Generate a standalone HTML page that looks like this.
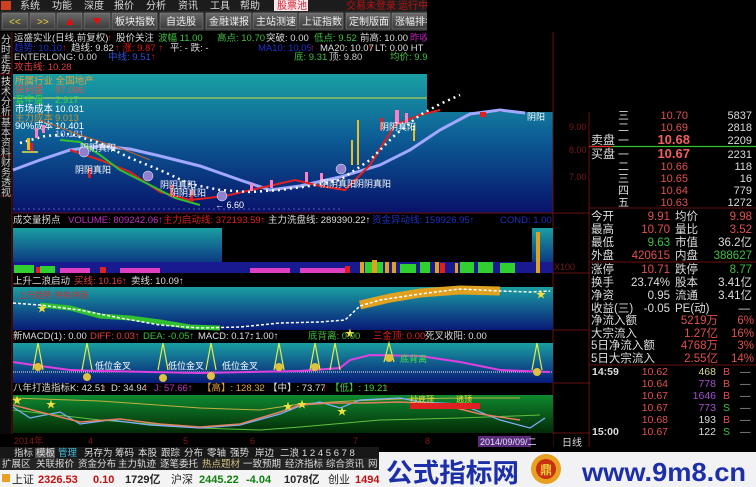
<!DOCTYPE html>
<html><head><meta charset="utf-8"><style>
html,body{margin:0;padding:0;background:#000;width:756px;height:487px;overflow:hidden}
svg{display:block}
text{font-family:"Liberation Sans","Noto Sans CJK SC",sans-serif}
</style></head><body>
<svg width="756" height="487" viewBox="0 0 756 487" xmlns="http://www.w3.org/2000/svg">
<defs>
<linearGradient id="g1" x1="0" y1="0" x2="0" y2="1"><stop offset="0" stop-color="#1aa0a4"/><stop offset="0.45" stop-color="#0d5e96"/><stop offset="1" stop-color="#07126a"/></linearGradient>
<linearGradient id="g2" x1="0" y1="0" x2="0" y2="1"><stop offset="0" stop-color="#1a9ea2"/><stop offset="1" stop-color="#081a78"/></linearGradient>
<linearGradient id="g3" x1="0" y1="0" x2="0" y2="1"><stop offset="0" stop-color="#0f8a30"/><stop offset="1" stop-color="#032a06"/></linearGradient>
<linearGradient id="tb" x1="0" y1="0" x2="0" y2="1"><stop offset="0" stop-color="#6a6a6a"/><stop offset="1" stop-color="#3a3a3a"/></linearGradient>
</defs>
<rect width="756" height="487" fill="#000"/>
<!-- menu -->
<rect x="0" y="0" width="427" height="11" fill="#1c1c1c"/>
<rect x="1" y="1" width="10" height="9" fill="#d04020"/>
<g font-size="10" fill="#ddd">
<text x="20" y="9">系统</text><text x="52" y="9">功能</text><text x="84" y="9">深度</text><text x="114" y="9">报价</text><text x="146" y="9">分析</text><text x="178" y="9">资讯</text><text x="210" y="9">工具</text><text x="240" y="9">帮助</text></g>
<rect x="274" y="0" width="34" height="11" fill="#f2e8ec"/>
<text x="277" y="9" font-size="10" fill="#e02030">股票池</text>
<text x="346" y="9" font-size="10" fill="#c01010">交易未登录</text>
<text x="398" y="9" font-size="10" fill="#c01010">运行中</text>
<!-- toolbar -->
<rect x="0" y="11" width="427" height="20" fill="#2a2a2a"/>
<g fill="url(#tb)" stroke="#888" stroke-width="0.6">
<rect x="2" y="13" width="26" height="16"/><rect x="30" y="13" width="25" height="16"/><rect x="57" y="13" width="25" height="16"/><rect x="84" y="13" width="26" height="16"/>
<rect x="112" y="13" width="45" height="16"/><rect x="160" y="13" width="43" height="16"/><rect x="206" y="13" width="45" height="16"/><rect x="253" y="13" width="44" height="16"/><rect x="299" y="13" width="44" height="16"/><rect x="346" y="13" width="44" height="16"/><rect x="392" y="13" width="36" height="16"/></g>
<text x="9" y="25" font-size="10" fill="#e8d040">&lt;&lt;</text><text x="37" y="25" font-size="10" fill="#e8d040">&gt;&gt;</text>
<path d="M66 25 L70 18 L74 25Z" fill="#e01010"/><path d="M93 18 L101 18 L97 25Z" fill="#e01010"/>
<g font-size="10" fill="#eee"><text x="115" y="25">板块指数</text><text x="166" y="25">自选股</text><text x="209" y="25">金融谍报</text><text x="256" y="25">主站测速</text><text x="302" y="25">上证指数</text><text x="349" y="25">定制版面</text><text x="395" y="25">涨幅排名</text></g>
<!-- left sidebar -->
<rect x="0" y="32" width="12" height="403" fill="#0a0a0a"/>
<g stroke="#6a1010" stroke-width="1"><line x1="12" y1="32" x2="12" y2="435"/><line x1="0" y1="74" x2="12" y2="74"/><line x1="0" y1="116" x2="12" y2="116"/><line x1="0" y1="156" x2="12" y2="156"/><line x1="0" y1="196" x2="12" y2="196"/></g>
<g font-size="10" fill="#ccc" text-anchor="middle">
<text x="6" y="43">分</text><text x="6" y="53">时</text><text x="6" y="63">走</text><text x="6" y="73">势</text>
<text x="6" y="85" fill="#e8e8e8">技</text><text x="6" y="95">术</text><text x="6" y="105">分</text><text x="6" y="115">析</text>
<text x="6" y="126">基</text><text x="6" y="136">本</text><text x="6" y="146">资</text><text x="6" y="156">料</text>
<text x="6" y="166">财</text><text x="6" y="176">务</text><text x="6" y="186">透</text><text x="6" y="196">视</text></g>
<!-- info lines -->
<g font-size="9.5">
<text x="14" y="41" fill="#ddd">运盛实业(日线,前复权)</text><text x="107" y="41" fill="#e01010">↑</text><text x="116" y="41" fill="#ddd">股价关注</text>
<text x="158" y="41" fill="#40c040">波幅 11.00</text><text x="217" y="41" fill="#40c040">高点: 10.70</text><text x="266" y="41" fill="#ddd">突破: 0.00</text><text x="314" y="41" fill="#40c040">低点: 9.52</text><text x="360" y="41" fill="#ddd">前高: 10.00</text><text x="410" y="41" fill="#c020c0">昨收</text>
<text x="14" y="51" fill="#2030d0">趋势: 10.10</text><text x="62" y="51" fill="#e01010">↑</text><text x="71" y="51" fill="#ddd">趋线: 9.82</text><text x="115" y="51" fill="#e01010">↑ 涨: 9.87 ↑</text><text x="170" y="51" fill="#ddd">平: -  跌: -</text>
<text x="258" y="51" fill="#2030d0">MA10: 10.05</text><text x="310" y="51" fill="#e01010">↑</text><text x="320" y="51" fill="#ddd">MA20: 10.07</text><text x="368" y="51" fill="#e01010">↑</text><text x="375" y="51" fill="#ddd">LT: 0.00 HT</text>
<text x="14" y="60" fill="#ccc">ENTERLONG: 0.00</text><text x="108" y="60" fill="#3050e0">中线: 9.51</text><text x="151" y="60" fill="#e01010">↑</text>
<text x="294" y="60" fill="#40c040">底: 9.31</text><text x="329" y="60" fill="#ccc">顶: 9.80</text><text x="390" y="60" fill="#40c040">均价: 9.98</text>
<text x="14" y="70" fill="#e04040">攻击线: 10.28</text></g>
<!-- main chart -->
<rect x="13" y="74" width="540" height="139" fill="url(#g1)"/>
<rect x="427" y="0" width="329" height="112" fill="#000"/>
<line x1="13" y1="98" x2="427" y2="98" stroke="#d8e040" stroke-width="1"/>
<line x1="13" y1="209" x2="340" y2="209" stroke="#5060c0" stroke-dasharray="2,3"/>
<g font-size="9.5">
<text x="15" y="84" fill="#e0a040">所属行业 全国地产</text>
<text x="15" y="93" fill="#e05050">获利盘</text><text x="55" y="93" fill="#e05050">97.096</text>
<text x="15" y="103" fill="#40d040">套牢盘</text><text x="55" y="103" fill="#40d040">2.917</text>
<text x="15" y="112" fill="#fff">市场成本</text><text x="55" y="112" fill="#fff">10.031</text>
<text x="15" y="121" fill="#c09040">主力成本</text><text x="55" y="121" fill="#c09040">9.013</text>
<text x="15" y="129" fill="#fff">90%成本</text><text x="55" y="129" fill="#fff">10.401</text>
<text x="55" y="137" fill="#c0c0ff">10.181</text></g>
<polyline fill="none" stroke="#a0a8ff" stroke-width="3" points="13,170 40,160 70,150 100,146 130,149 160,156 200,166 240,180 270,190 300,186 340,177 380,165 410,150 440,130 470,114 500,110 525,113"/>
<polyline fill="none" stroke="#c06030" stroke-width="1" points="40,120 80,135 120,148 150,160"/>
<polyline fill="none" stroke="#e02020" stroke-width="2" points="70,150 100,160 130,172 160,192 190,200 225,196 260,188 295,180 320,186 345,190 370,165 395,125 420,115 440,110"/>
<polyline fill="none" stroke="#30c030" stroke-width="2" points="60,140 80,142 100,155 120,170 150,185 175,198 200,205"/>
<polyline fill="none" stroke="#fff" stroke-width="2.5" stroke-dasharray="2,4" points="20,143 45,136 70,134 100,143 130,158 160,170 190,184 220,190 250,192 280,190 310,186 340,180 370,160 395,135 420,115 440,104 460,95"/>
<g fill="#e8c020"><rect x="27" y="138" width="3" height="12"/><rect x="357" y="120" width="2" height="45"/><rect x="351" y="140" width="2" height="25"/><rect x="413" y="125" width="2" height="16"/></g>
<g fill="#ff80c0"><rect x="35" y="128" width="3" height="10"/><rect x="42" y="125" width="3" height="8"/><rect x="250" y="183" width="3" height="8"/><rect x="270" y="180" width="3" height="8"/><rect x="305" y="172" width="3" height="10"/><rect x="320" y="173" width="3" height="8"/><rect x="395" y="110" width="4" height="14"/><rect x="405" y="113" width="3" height="10"/></g>
<g fill="#e02020"><rect x="30" y="143" width="3" height="8"/><rect x="88" y="168" width="3" height="10"/><rect x="170" y="185" width="3" height="12"/><rect x="190" y="190" width="3" height="12"/><rect x="380" y="118" width="3" height="12"/><rect x="480" y="112" width="6" height="5"/></g>
<line x1="22" y1="152" x2="38" y2="152" stroke="#f0e040" stroke-width="1.5"/>
<g font-size="9" fill="#fff"><text x="75" y="173">阴阴真阳</text><text x="160" y="188">阴阴真阳</text><text x="170" y="196">阴阴真阳</text><text x="320" y="187">阴阴真阳</text><text x="355" y="187">阴阴真阳</text><text x="380" y="130">阴阴真阳</text><text x="80" y="151">阴阴真阳</text><text x="527" y="120">阴阳</text><text x="215" y="208">← 6.60</text></g>
<g fill="#9080d0" stroke="#fff" stroke-width="0.5"><circle cx="84" cy="152" r="5"/><circle cx="148" cy="176" r="5"/><circle cx="222" cy="196" r="5"/><circle cx="341" cy="169" r="5"/></g>
<!-- right axis area -->
<line x1="553" y1="32" x2="553" y2="447" stroke="#6a1010"/>
<line x1="589" y1="112" x2="589" y2="447" stroke="#6a1010"/>
<g stroke="#6a1010"><line x1="13" y1="213" x2="590" y2="213"/><line x1="553" y1="273" x2="590" y2="273"/><line x1="553" y1="330" x2="590" y2="330"/><line x1="553" y1="383" x2="590" y2="383"/><line x1="553" y1="433" x2="590" y2="433"/></g>
<g font-size="9" fill="#7a1818"><text x="569" y="130">9.00</text><text x="569" y="153">8.00</text><text x="569" y="180">7.00</text><text x="554" y="270">X100</text></g>
<!-- volume -->
<g font-size="9.5"><text x="13" y="223" fill="#ddd">成交量拐点</text><text x="68" y="223" fill="#c030c0">VOLUME: 809242.06↑</text><text x="163" y="223" fill="#e02020">主力启动线: 372193.59↑</text><text x="268" y="223" fill="#ddd">主力洗盘线: 289390.22↑</text><text x="372" y="223" fill="#2030c0">资金异动线: 159926.95↑</text><text x="500" y="223" fill="#2030c0">COND: 1.00</text></g>
<rect x="13" y="228" width="540" height="45" fill="url(#g2)"/>
<rect x="222" y="228" width="310" height="34" fill="#000"/>
<rect x="13" y="262" width="540" height="11" fill="#1a1a90"/>
<g fill="#30d030"><rect x="14" y="265" width="20" height="8"/><rect x="40" y="266" width="15" height="7"/><rect x="365" y="262" width="18" height="11"/><rect x="400" y="264" width="16" height="9"/><rect x="420" y="262" width="10" height="11"/><rect x="460" y="262" width="14" height="11"/><rect x="478" y="262" width="15" height="11"/><rect x="500" y="263" width="15" height="10"/></g>
<g fill="#e0a020"><rect x="360" y="262" width="4" height="11"/><rect x="372" y="260" width="5" height="13"/><rect x="385" y="262" width="4" height="11"/><rect x="392" y="262" width="4" height="11"/><rect x="435" y="262" width="4" height="11"/><rect x="455" y="263" width="3" height="10"/><rect x="536" y="232" width="4" height="41"/></g>
<g fill="#e040c0"><rect x="60" y="268" width="30" height="5"/><rect x="120" y="268" width="40" height="5"/><rect x="250" y="268" width="40" height="5"/><rect x="300" y="268" width="50" height="5"/></g>
<g fill="#e02020"><rect x="36" y="267" width="4" height="6"/><rect x="100" y="267" width="6" height="6"/><rect x="345" y="266" width="5" height="7"/><rect x="440" y="263" width="5" height="10"/></g>
<!-- 上升二浪 -->
<g font-size="9.5"><text x="13" y="284" fill="#ddd">上升二浪启动</text><text x="74" y="284" fill="#e04040">买线: 10.16↑</text><text x="131" y="284" fill="#ddd">卖线: 10.09↑</text></g>
<rect x="13" y="287" width="540" height="43" fill="url(#g2)"/>
<text x="18" y="298" font-size="8.5" fill="#d03030">上升趋势  持有待涨</text>
<polyline fill="none" stroke="#30c030" stroke-width="5" points="40,305 70,308 100,316 130,318 160,322 190,327 220,328"/>
<polyline fill="none" stroke="#e0a020" stroke-width="9" points="360,305 390,298 420,293 460,290 500,291"/>
<polyline fill="none" stroke="#fff" stroke-width="1.5" stroke-dasharray="3,2" points="13,303 40,305 80,310 120,318 160,325 200,328 240,327 280,323 320,322 345,320 360,306 380,300 420,294 460,289 500,291 530,292 550,291"/>
<g fill="#f0e040"><text x="37" y="312" font-size="10">★</text><text x="345" y="337" font-size="10">★</text><text x="536" y="298" font-size="10">★</text></g>
<!-- MACD -->
<g font-size="9.5"><text x="13" y="339" fill="#ddd">新MACD(1)</text><text x="63" y="339" fill="#ddd">: 0.00</text><text x="90" y="339" fill="#e04040">DIFF: 0.03↑</text><text x="143" y="339" fill="#40c040">DEA: -0.05↑</text><text x="198" y="339" fill="#ddd">MACD: 0.17↑</text><text x="250" y="339" fill="#ddd">: 1.00↑</text><text x="308" y="339" fill="#40c040">底背离: 0.00</text><text x="373" y="339" fill="#e02020">三金顶: 0.00</text><text x="425" y="339" fill="#ddd">死叉收阳: 0.00</text></g>
<rect x="13" y="343" width="540" height="40" fill="url(#g2)"/>
<line x1="13" y1="372" x2="553" y2="372" stroke="#e8e8e8" stroke-width="1" stroke-dasharray="1,1"/>
<polyline fill="none" stroke="#e040e0" stroke-width="2" points="13,362 40,366 70,370 100,371 150,372 200,373 250,372 300,371 340,368 350,360 370,355 420,356 460,362 500,370 550,372"/>
<g fill="none" stroke="#e0f040" stroke-width="1.2">
<path d="M33 370 L38 343 L43 370"/><path d="M82 370 L87 343 L92 370"/><path d="M158 370 L163 343 L168 370"/><path d="M206 370 L211 343 L216 370"/><path d="M274 370 L279 343 L284 370"/><path d="M310 370 L315 343 L320 370"/><path d="M330 370 L335 343 L340 370"/><path d="M384 362 L389 343 L394 362"/><path d="M532 370 L537 343 L542 370"/></g>
<g font-size="9" fill="#fff"><text x="95" y="369">低位金叉</text><text x="168" y="369">低位金叉</text><text x="222" y="369">低位金叉</text><text x="400" y="362" fill="#40e040">底背离</text></g>
<g fill="#e0c040"><circle cx="38" cy="367" r="4"/><circle cx="87" cy="377" r="4"/><circle cx="163" cy="378" r="4"/><circle cx="211" cy="376" r="4"/><circle cx="279" cy="367" r="4"/><circle cx="315" cy="367" r="4"/><circle cx="389" cy="358" r="4"/><circle cx="537" cy="372" r="4"/></g>
<!-- KDJ -->
<g font-size="9.5"><text x="13" y="391" fill="#ddd">八年打造指标</text><text x="70" y="391" fill="#ddd">K: 42.51</text><text x="102" y="391" fill="#e02020">↑</text><text x="111" y="391" fill="#ddd">D: 34.94</text><text x="143" y="391" fill="#e02020">↑</text><text x="154" y="391" fill="#c030c0">J: 57.66↑</text><text x="202" y="391" fill="#e0a040">【高】: 128.32</text><text x="258" y="391" fill="#40b0e0">↓</text><text x="268" y="391" fill="#ddd">【中】: 73.77</text><text x="322" y="391" fill="#e02020">↑</text><text x="330" y="391" fill="#40d040">【低】: 19.21</text><text x="384" y="391" fill="#e02020">↑</text></g>
<rect x="13" y="395" width="540" height="38" fill="url(#g3)"/>
<polyline fill="none" stroke="#c0b040" stroke-width="1" points="13,398 100,401 200,408 260,410 300,404 350,401 400,399 460,398 520,398"/>
<polyline fill="none" stroke="#60c040" stroke-width="1" points="13,410 100,420 200,428 260,430 300,427 380,420 460,418 540,415"/>
<polyline fill="none" stroke="#80b0ff" stroke-width="1.2" points="13,407 30,418 60,412 80,424 110,420 150,425 200,428 240,425 280,414 300,406 320,402 340,408 360,400 400,398 420,402 460,404 500,420 530,428 545,418"/>
<polyline fill="none" stroke="#e08060" stroke-width="1.5" points="13,405 40,412 80,422 120,419 160,424 200,427 240,424 280,412 300,405 330,403 360,403 400,402 440,404 480,414 520,420"/>
<rect x="410" y="403" width="70" height="6" fill="#e02020"/>
<g fill="#f0e040" font-size="10"><text x="12" y="404">★</text><text x="46" y="408">★</text><text x="283" y="410">★</text><text x="297" y="408">★</text><text x="337" y="415">★</text></g>
<g font-size="8" fill="#f0e040"><text x="410" y="402">抄底顶</text><text x="456" y="402">逃顶</text></g>
<!-- date bar -->
<rect x="0" y="434" width="553" height="13" fill="#000"/>
<g font-size="9" fill="#801818"><text x="14" y="444">2014年</text><text x="88" y="444">4</text><text x="183" y="444">5</text><text x="250" y="444">6</text><text x="353" y="444">7</text><text x="425" y="444">8</text></g>
<rect x="478" y="436" width="53" height="11" fill="#5a2a7a"/>
<text x="480" y="445" font-size="9" fill="#e0e0ff">2014/09/09/二</text>
<text x="562" y="446" font-size="10" fill="#ddd">日线</text>
<!-- tabs -->
<rect x="0" y="447" width="379" height="11" fill="#181818"/>
<g font-size="9.5" fill="#ddd"><text x="14" y="456">指标</text><rect x="35" y="448" width="20" height="10" fill="#505050"/><text x="36" y="456">模板</text><text x="58" y="456" fill="#40c0e0">管理</text><text x="84" y="456">另存为</text><text x="115" y="456">筹码</text><text x="138" y="456">本股</text><text x="161" y="456">跟踪</text><text x="184" y="456">分布</text><text x="207" y="456">零轴</text><text x="230" y="456">强势</text><text x="255" y="456">岸边</text><text x="280" y="456">二浪</text><text x="302" y="456">1 2 4 5 6 7 8</text></g>
<rect x="0" y="458" width="379" height="12" fill="#242424"/>
<g font-size="9.5" fill="#ddd"><text x="2" y="467">扩展区</text><text x="36" y="467">关联报价</text><text x="78" y="467">资金分布</text><text x="118" y="467">主力轨迹</text><text x="160" y="467">逐笔委托</text><text x="202" y="467" fill="#d0c080">热点题材</text><text x="243" y="467">一致预期</text><text x="285" y="467">经济指标</text><text x="326" y="467">综合资讯</text><text x="368" y="467">网</text></g>
<rect x="0" y="470" width="379" height="17" fill="#f4f4f4"/>
<rect x="2" y="474" width="8" height="8" fill="#e8a020"/>
<g font-size="11" font-weight="bold"><text x="12" y="483" fill="#222" font-weight="normal">上证</text><text x="38" y="483" fill="#c01010">2326.53</text><text x="93" y="483" fill="#c01010">0.10</text><text x="125" y="483" fill="#222">1729亿</text><text x="171" y="483" fill="#222" font-weight="normal">沪深</text><text x="199" y="483" fill="#108010">2445.22</text><text x="246" y="483" fill="#108010">-4.04</text><text x="284" y="483" fill="#222">1078亿</text><text x="328" y="483" fill="#222" font-weight="normal">创业</text><text x="355" y="483" fill="#c01010">1494</text></g>
<!-- logo -->
<rect x="379" y="452" width="377" height="35" fill="#f2f2f4"/>
<text x="386" y="482" font-size="26" font-weight="bold" fill="#1c2fa8" textLength="133" lengthAdjust="spacingAndGlyphs">公式指标网</text>
<circle cx="546" cy="469" r="15" fill="#e8a020"/>
<circle cx="546" cy="469" r="10" fill="#c83010"/>
<text x="540" y="474" font-size="12" font-weight="bold" fill="#f0d040">鼎</text>
<text x="582" y="481" font-size="26" font-weight="bold" fill="#1c2fa8" textLength="164" lengthAdjust="spacingAndGlyphs">www.9m8.cn</text>
<!-- right panel -->
<g font-size="11">
<text x="618" y="119" fill="#ddd">三</text><text x="688" y="119" fill="#e05050" text-anchor="end">10.70</text><text x="752" y="119" fill="#ddd" text-anchor="end">5837</text>
<text x="618" y="131" fill="#ddd">二</text><text x="688" y="131" fill="#e05050" text-anchor="end">10.69</text><text x="752" y="131" fill="#ddd" text-anchor="end">2818</text>
<text x="591" y="144" fill="#ddd" font-size="12">卖盘</text><text x="618" y="144" fill="#ddd">一</text><text x="690" y="144" fill="#f06060" text-anchor="end" font-size="13" font-weight="bold">10.68</text><text x="752" y="144" fill="#ddd" text-anchor="end">2209</text>
<line x1="591" y1="146.5" x2="756" y2="146.5" stroke="#30c030" stroke-width="1.3"/>
<line x1="589" y1="146.5" x2="612" y2="146.5" stroke="#e02020" stroke-width="1.3"/>
<text x="591" y="158" fill="#ddd" font-size="12">买盘</text><text x="618" y="158" fill="#ddd">一</text><text x="690" y="158" fill="#f06060" text-anchor="end" font-size="13" font-weight="bold">10.67</text><text x="752" y="158" fill="#ddd" text-anchor="end">2231</text>
<text x="618" y="170" fill="#ddd">二</text><text x="688" y="170" fill="#e05050" text-anchor="end">10.66</text><text x="752" y="170" fill="#ddd" text-anchor="end">118</text>
<text x="618" y="182" fill="#ddd">三</text><text x="688" y="182" fill="#e05050" text-anchor="end">10.65</text><text x="752" y="182" fill="#ddd" text-anchor="end">16</text>
<text x="618" y="194" fill="#ddd">四</text><text x="688" y="194" fill="#e05050" text-anchor="end">10.64</text><text x="752" y="194" fill="#ddd" text-anchor="end">779</text>
<text x="618" y="206" fill="#ddd">五</text><text x="688" y="206" fill="#e05050" text-anchor="end">10.63</text><text x="752" y="206" fill="#ddd" text-anchor="end">1272</text>
</g>
<g stroke="#6a1010"><line x1="589" y1="208" x2="756" y2="208"/><line x1="589" y1="262" x2="756" y2="262"/><line x1="589" y1="365" x2="756" y2="365"/></g>
<g font-size="11.5">
<text x="591" y="220" fill="#ddd">今开</text><text x="670" y="220" fill="#e05050" text-anchor="end">9.91</text><text x="675" y="220" fill="#ddd">均价</text><text x="752" y="220" fill="#e05050" text-anchor="end">9.98</text>
<text x="591" y="233" fill="#ddd">最高</text><text x="670" y="233" fill="#e05050" text-anchor="end">10.70</text><text x="675" y="233" fill="#ddd">量比</text><text x="752" y="233" fill="#e05050" text-anchor="end">3.52</text>
<text x="591" y="246" fill="#ddd">最低</text><text x="670" y="246" fill="#40c040" text-anchor="end">9.63</text><text x="675" y="246" fill="#ddd">市值</text><text x="752" y="246" fill="#ddd" text-anchor="end">36.2亿</text>
<text x="591" y="259" fill="#ddd">外盘</text><text x="670" y="259" fill="#e05050" text-anchor="end">420615</text><text x="675" y="259" fill="#ddd">内盘</text><text x="752" y="259" fill="#40c040" text-anchor="end">388627</text>
<text x="591" y="273" fill="#ddd">涨停</text><text x="670" y="273" fill="#e05050" text-anchor="end">10.71</text><text x="675" y="273" fill="#ddd">跌停</text><text x="752" y="273" fill="#40c040" text-anchor="end">8.77</text>
<text x="591" y="286" fill="#ddd">换手</text><text x="670" y="286" fill="#ddd" text-anchor="end">23.74%</text><text x="675" y="286" fill="#ddd">股本</text><text x="752" y="286" fill="#ddd" text-anchor="end">3.41亿</text>
<text x="591" y="299" fill="#ddd">净资</text><text x="670" y="299" fill="#ddd" text-anchor="end">0.95</text><text x="675" y="299" fill="#ddd">流通</text><text x="752" y="299" fill="#ddd" text-anchor="end">3.41亿</text>
<text x="591" y="312" fill="#ddd">收益(三)</text><text x="670" y="312" fill="#ddd" text-anchor="end">-0.05</text><text x="675" y="312" fill="#ddd">PE(动)</text><text x="750" y="312" fill="#ddd" text-anchor="end">—</text>
<text x="591" y="324" fill="#ddd">净流入额</text><text x="718" y="324" fill="#e05050" text-anchor="end">5219万</text><text x="754" y="324" fill="#e05050" text-anchor="end">6%</text>
<text x="591" y="337" fill="#ddd">大宗流入</text><text x="718" y="337" fill="#e05050" text-anchor="end">1.27亿</text><text x="754" y="337" fill="#e05050" text-anchor="end">16%</text>
<text x="591" y="349" fill="#ddd">5日净流入额</text><text x="718" y="349" fill="#e05050" text-anchor="end">4768万</text><text x="754" y="349" fill="#e05050" text-anchor="end">3%</text>
<text x="591" y="362" fill="#ddd">5日大宗流入</text><text x="718" y="362" fill="#e05050" text-anchor="end">2.55亿</text><text x="754" y="362" fill="#e05050" text-anchor="end">14%</text>
</g>
<g font-size="10.5">
<text x="592" y="375" fill="#ddd" font-weight="bold">14:59</text>
<text x="668" y="375" fill="#e05050" text-anchor="end">10.62</text><text x="716" y="375" fill="#d8d8a0" text-anchor="end">468</text><text x="723" y="375" fill="#e05050">B</text><text x="740" y="375" fill="#aaa">—</text>
<text x="668" y="387" fill="#e05050" text-anchor="end">10.64</text><text x="716" y="387" fill="#a050d0" text-anchor="end">778</text><text x="723" y="387" fill="#e05050">B</text><text x="740" y="387" fill="#aaa">—</text>
<text x="668" y="399" fill="#e05050" text-anchor="end">10.67</text><text x="716" y="399" fill="#a050d0" text-anchor="end">1646</text><text x="723" y="399" fill="#e05050">B</text><text x="740" y="399" fill="#aaa">—</text>
<text x="668" y="411" fill="#e05050" text-anchor="end">10.67</text><text x="716" y="411" fill="#a050d0" text-anchor="end">773</text><text x="723" y="411" fill="#40c040">S</text><text x="740" y="411" fill="#aaa">—</text>
<text x="668" y="423" fill="#e05050" text-anchor="end">10.68</text><text x="716" y="423" fill="#ddd" text-anchor="end">193</text><text x="723" y="423" fill="#e05050">B</text><text x="740" y="423" fill="#aaa">—</text>
<text x="592" y="435" fill="#ddd" font-weight="bold">15:00</text>
<text x="668" y="435" fill="#e05050" text-anchor="end">10.67</text><text x="716" y="435" fill="#ddd" text-anchor="end">122</text><text x="723" y="435" fill="#40c040">S</text><text x="740" y="435" fill="#aaa">—</text>
</g>
</svg>
</body></html>
